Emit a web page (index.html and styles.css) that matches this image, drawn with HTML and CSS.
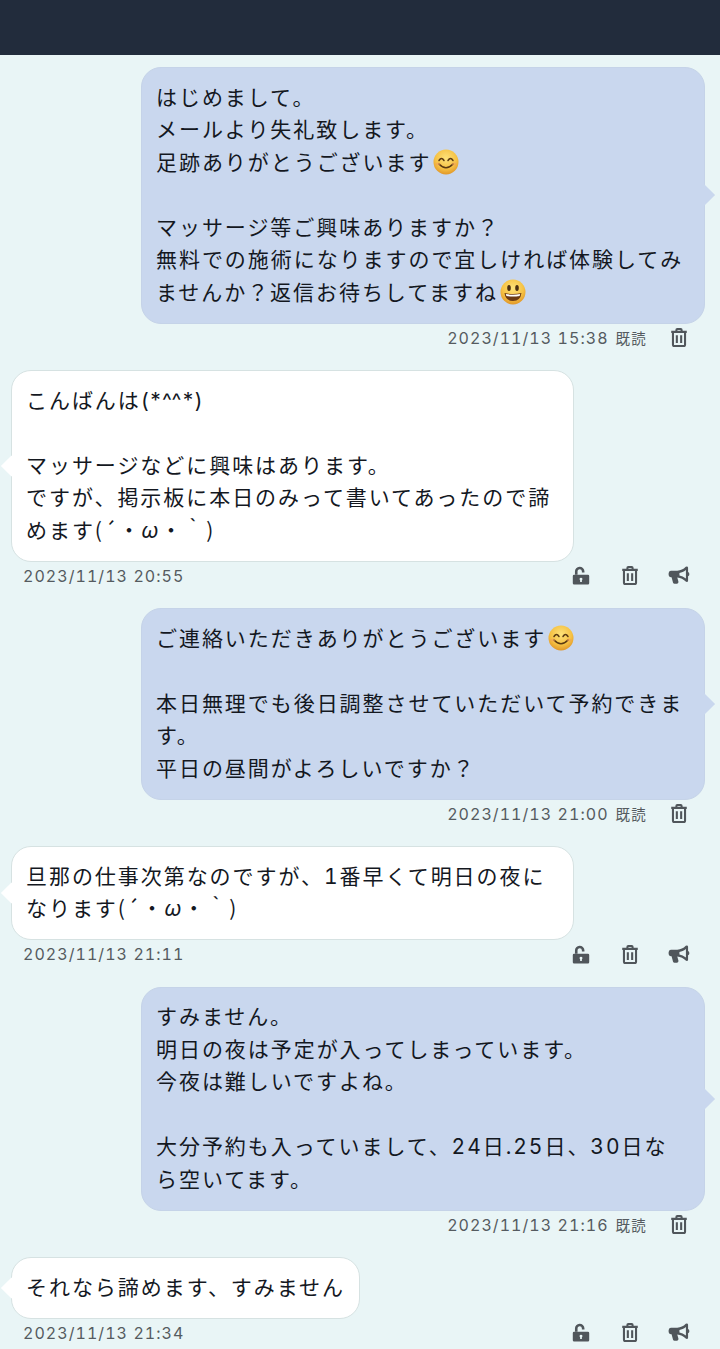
FILE: index.html
```html
<!DOCTYPE html>
<html lang="ja">
<head>
<meta charset="utf-8">
<title>メッセージ</title>
<link rel="stylesheet" href="styles.css">
</head>
<body>
<svg class="sprite" aria-hidden="true">
  <defs>
    <radialGradient id="face" cx="50%" cy="35%" r="70%">
      <stop offset="0" stop-color="#fde27a"/>
      <stop offset="0.6" stop-color="#f6c244"/>
      <stop offset="1" stop-color="#dc8d22"/>
    </radialGradient>
    <symbol id="e-smile" viewBox="0 0 26 26">
      <circle cx="13" cy="13" r="12.5" fill="url(#face)"/>
      <path d="M6 11.500q2.500-4 5 0M15 11.500q2.500-4 5 0" fill="none" stroke="#5b3a12" stroke-width="1.500" stroke-linecap="round"/>
      <path d="M6 15q7 7.500 14 0" fill="none" stroke="#5b3a12" stroke-width="1.600" stroke-linecap="round"/>
      <ellipse cx="5" cy="15" rx="2.500" ry="1.500" fill="#f29a5c" opacity=".5"/>
      <ellipse cx="21" cy="15" rx="2.500" ry="1.500" fill="#f29a5c" opacity=".5"/>
    </symbol>
    <symbol id="e-grin" viewBox="0 0 26 26">
      <circle cx="13" cy="13" r="12.500" fill="url(#face)"/>
      <ellipse cx="9" cy="9" rx="1.800" ry="3" fill="#4a2e10"/>
      <ellipse cx="17" cy="9" rx="1.800" ry="3" fill="#4a2e10"/>
      <path d="M4.500 14q8.500 2 17 0q-1 8-8.500 8t-8.500-8z" fill="#6b3a14"/>
      <path d="M5.800 15q7.200 1.500 14.400 0l-.6 2q-6.600 1.200-13.200 0z" fill="#fff"/>
    </symbol>
    <symbol id="i-trash" viewBox="0 0 20 22">
      <path d="M1 4.500h18M7 4V2.200q0-1 1-1h4q1 0 1 1V4M3 5v14.300q0 1.700 1.700 1.700h10.600q1.700 0 1.700-1.700V5M7.500 8.500v9M12.500 8.500v9" fill="none" stroke="currentColor" stroke-width="2.400"/>
    </symbol>
    <symbol id="i-unlock" viewBox="0 0 20 22">
      <path d="M3 10V6.500a5.500 5.500 0 0 1 11-.5v1.500h-3V6a2.500 2.500 0 0 0-5 .5V10z" fill="currentColor"/>
      <path fill-rule="evenodd" d="M2 10h16q1.500 0 1.500 1.500v8.500q0 1.500-1.500 1.500H2q-1.500 0-1.500-1.500v-8.500Q.5 10 2 10zM10 13.500a1.600 1.600 0 0 0-1 2.900V18.500h2v-2.100a1.600 1.600 0 0 0-1-2.900z" fill="currentColor"/>
    </symbol>
    <symbol id="i-horn" viewBox="0 0 24 22">
      <path fill-rule="evenodd" d="M21 .5q1.500 0 1.500 1.500v5q1.500.6 1.500 2.500T22.500 12v5q0 1.500-1.500 1.500-.7 0-1.200-.5C17 15.200 14 13.600 10 13.300l1.300 4.700c.3 1-.5 2.500-1.800 2.500H6.800c-.8 0-1.400-.5-1.700-1.200L3.400 13H2.500Q0 13 0 10.500V8.500Q0 5.500 2.500 5.500H10C14 5.500 17 3.800 19.800 1q.5-.5 1.200-.5zM20 4.500C17.500 6.500 15 7.500 12.500 8v3c2.500.5 5 1.500 7.500 3.500z" fill="currentColor"/>
    </symbol>
  </defs>
</svg>

<header class="topbar"></header>

<main class="thread">
  <article class="msg msg-sent">
    <p class="bubble">はじめまして。<br>メールより失礼致します。<br>足跡ありがとうございます<svg class="emoji"><use href="#e-smile"/></svg><br><br>マッサージ等ご興味ありますか？<br>無料での施術になりますので宜しければ体験してみ<br>ませんか？返信お待ちしてますね<svg class="emoji"><use href="#e-grin"/></svg></p>
    <div class="meta">
      <time class="stamp">2023/11/13 15:38</time><span class="read">既読</span>
      <svg class="icon"><use href="#i-trash"/></svg>
    </div>
  </article>

  <article class="msg msg-recv">
    <p class="bubble">こんばんは<span class="tight">(*^^*)</span><br><br>マッサージなどに興味はあります。<br>ですが、掲示板に本日のみって書いてあったので諦<br>めます<span class="kao">(´・<i class="omega">ω</i>・｀)</span></p>
    <div class="meta">
      <time class="stamp">2023/11/13 20:55</time>
      <div class="actions">
        <svg class="icon"><use href="#i-unlock"/></svg>
        <svg class="icon"><use href="#i-trash"/></svg>
        <svg class="icon"><use href="#i-horn"/></svg>
      </div>
    </div>
  </article>

  <article class="msg msg-sent">
    <p class="bubble">ご連絡いただきありがとうございます<svg class="emoji"><use href="#e-smile"/></svg><br><br>本日無理でも後日調整させていただいて予約できま<br>す。<br>平日の昼間がよろしいですか？</p>
    <div class="meta">
      <time class="stamp">2023/11/13 21:00</time><span class="read">既読</span>
      <svg class="icon"><use href="#i-trash"/></svg>
    </div>
  </article>

  <article class="msg msg-recv">
    <p class="bubble">旦那の仕事次第なのですが、1番早くて明日の夜に<br>なります<span class="kao">(´・<i class="omega">ω</i>・｀)</span></p>
    <div class="meta">
      <time class="stamp">2023/11/13 21:11</time>
      <div class="actions">
        <svg class="icon"><use href="#i-unlock"/></svg>
        <svg class="icon"><use href="#i-trash"/></svg>
        <svg class="icon"><use href="#i-horn"/></svg>
      </div>
    </div>
  </article>

  <article class="msg msg-sent">
    <p class="bubble">すみません。<br>明日の夜は予定が入ってしまっています。<br>今夜は難しいですよね。<br><br>大分予約も入っていまして、24日.25日、30日な<br>ら空いてます。</p>
    <div class="meta">
      <time class="stamp">2023/11/13 21:16</time><span class="read">既読</span>
      <svg class="icon"><use href="#i-trash"/></svg>
    </div>
  </article>

  <article class="msg msg-recv msg-short">
    <p class="bubble">それなら諦めます、すみません</p>
    <div class="meta">
      <time class="stamp">2023/11/13 21:34</time>
      <div class="actions">
        <svg class="icon"><use href="#i-unlock"/></svg>
        <svg class="icon"><use href="#i-trash"/></svg>
        <svg class="icon"><use href="#i-horn"/></svg>
      </div>
    </div>
  </article>
</main>
</body>
</html>
```

FILE: styles.css
```css
* { box-sizing: border-box; }

html, body {
  margin: 0;
  padding: 0;
}

body {
  height: 1349px;
  overflow: hidden;
  background: #e9f5f6;
  font-family: "Inter", "Noto Sans CJK JP", "Noto Sans", sans-serif;
  font-variant-numeric: tabular-nums;
  color: #14181f;
}

.sprite {
  position: absolute;
  width: 0;
  height: 0;
}

.topbar {
  height: 55px;
  background: #222c3c;
}

.thread {
  display: flex;
  flex-direction: column;
  padding: 12px 0 0;
}

.msg {
  display: flex;
  flex-direction: column;
}

.msg-sent { padding: 0 15px 0 141px; }
.msg-recv { padding: 0 146px 0 11px; }

.bubble {
  position: relative;
  margin: 0;
  padding: 13.5px 14px;
  border-radius: 20px;
  border: 1px solid transparent;
  font-size: 21px;
  line-height: 32.5px;
  letter-spacing: 1.95px;
  white-space: nowrap;
}

.tight {
  letter-spacing: -.3px;
}

.kao {
  font-family: "Noto Sans CJK JP", sans-serif;
  line-height: 0;
}

.omega {
  font-family: "Inter", sans-serif;
  font-style: italic;
}

.msg-sent .bubble {
  background: #c9d7ee;
  border-color: #c5d3e8;
}

.msg-recv .bubble {
  background: #fff;
  border-color: #d6e2e2;
}

.msg-short .bubble { width: 349px; }

.bubble::after {
  content: "";
  position: absolute;
  top: 50%;
  width: 15px;
  height: 15px;
  transform: translateY(-50%) rotate(45deg);
}

.msg-sent .bubble::after {
  right: -8px;
  background: #c9d7ee;
}

.msg-recv .bubble::after {
  left: -8px;
  background: #fff;
}

.emoji {
  width: 26px;
  height: 26px;
  margin-left: 2px;
  vertical-align: -5px;
}

.meta {
  display: flex;
  align-items: center;
  height: 46.5px;
  padding-bottom: 18px;
  color: #555b60;
}

.stamp {
  font-size: 16px;
  letter-spacing: 1.05px;
  white-space: nowrap;
}

.read {
  margin-left: 7px;
  font-size: 14.5px;
  letter-spacing: 1.2px;
}

.icon {
  width: 24px;
  height: 19px;
  color: #50565b;
}

.msg-sent .meta {
  justify-content: flex-end;
  padding-right: 14px;
}

.msg-sent .meta .icon {
  margin-left: 20px;
}

.msg-recv .meta {
  padding-left: 12px;
}

.msg-recv .stamp {
  margin-right: auto;
}

.actions {
  display: flex;
  align-items: center;
  gap: 25px;
  margin-right: -117px;
}
```
